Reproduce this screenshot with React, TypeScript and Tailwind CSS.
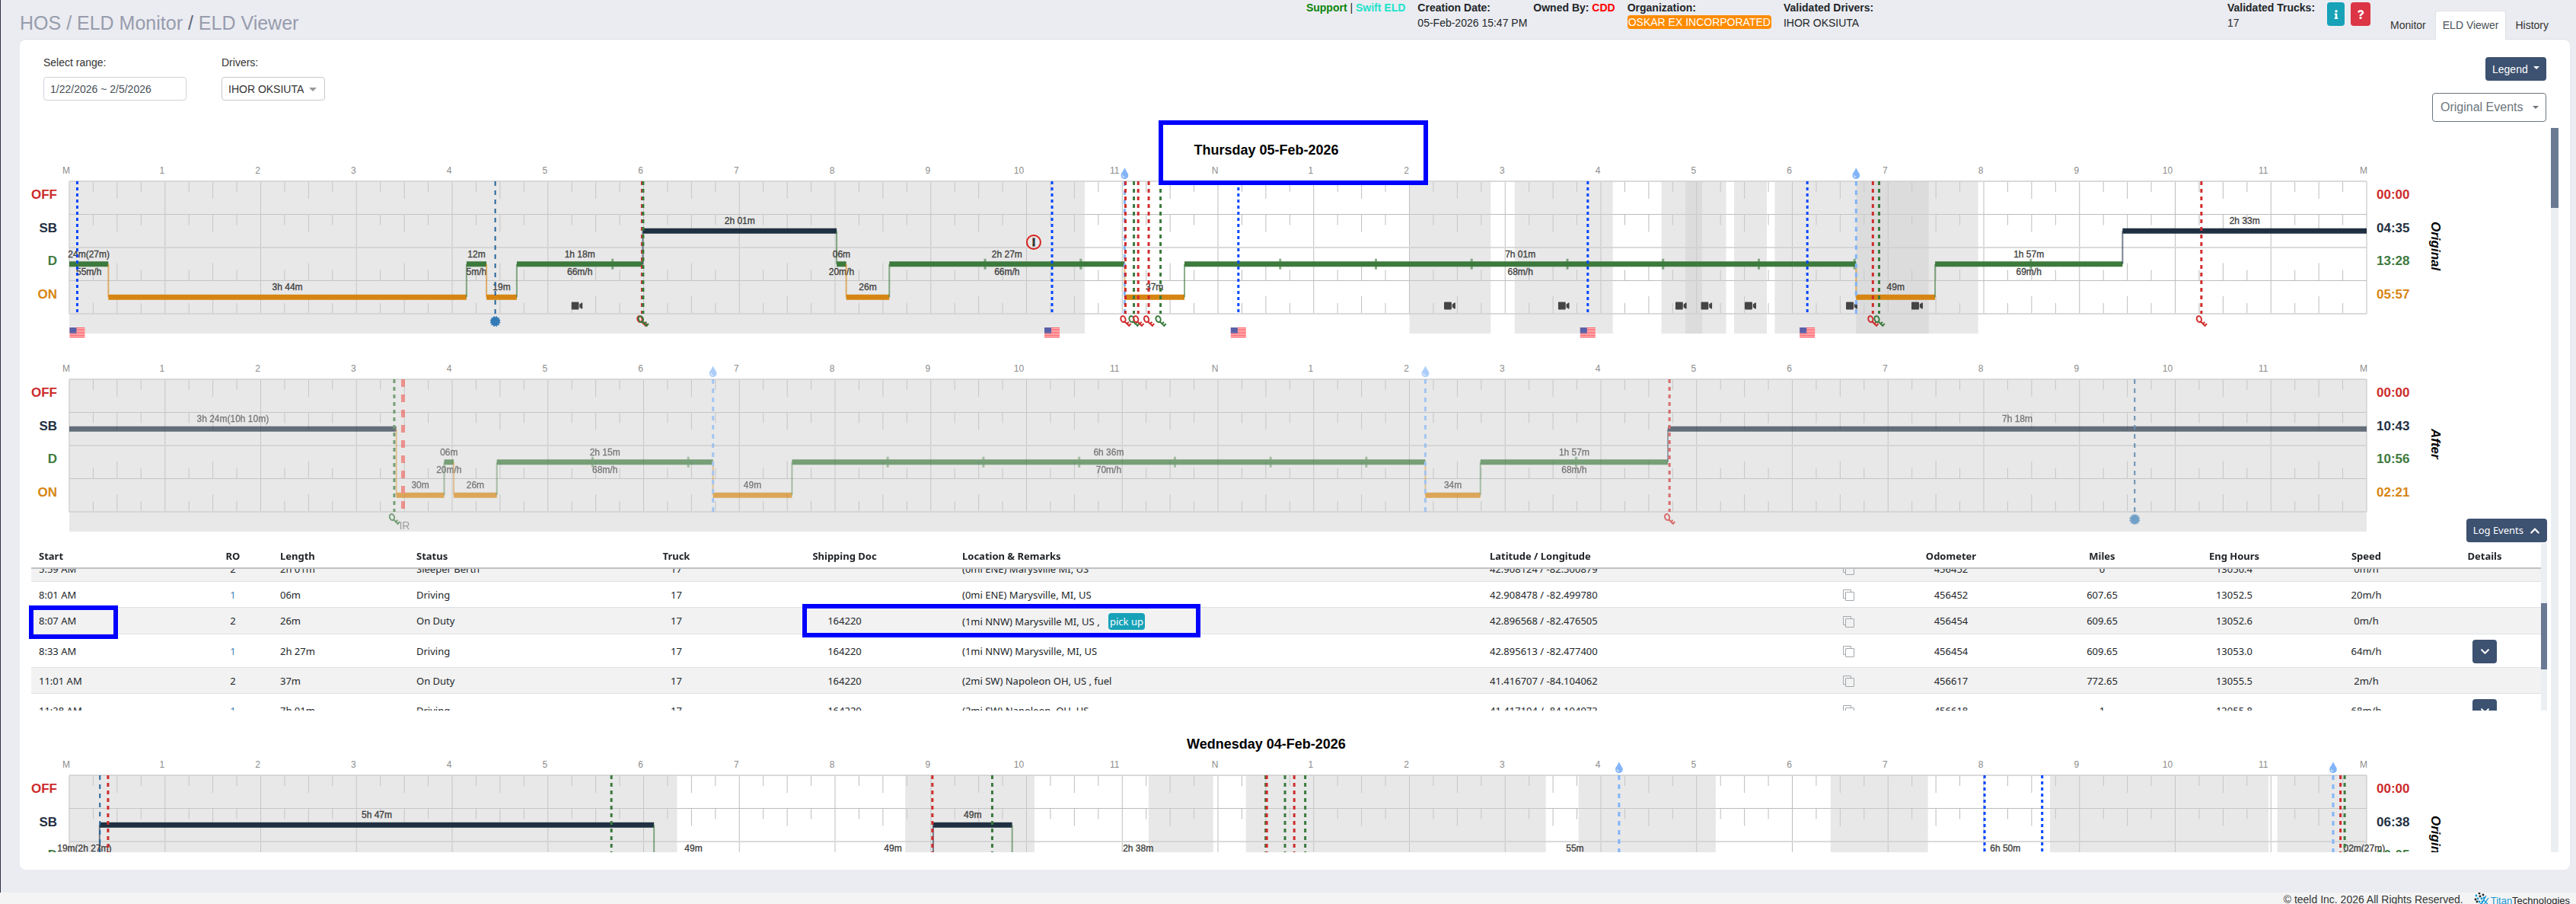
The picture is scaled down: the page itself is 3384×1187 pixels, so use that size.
import React, { useEffect, useRef } from 'react';
import { FaCertificate, FaChevronDown, FaChevronUp, FaInfo, FaQuestion, FaTint, FaVideo } from 'react-icons/fa';

type Duty = 'OFF' | 'SB' | 'D' | 'ON';
type MarkerKind = 'border' | 'cert' | 'on' | 'off' | 'fuel' | 'ir';

interface Segment {
    duty: Duty;
    from: number;
    to: number;
    label: string;
    speed?: string;
}

interface Marker {
    kind: MarkerKind;
    at: number;
}

interface DayLog {
    side: string;
    totals: string[];
    segments: Segment[];
    shades: [number, number][];
    markers: Marker[];
    cameras?: number[];
    alerts?: number[];
    dimmed?: boolean;
}

const DAY = 1440;
const TOP = 24;
const ROW = 43.5;
const GRID = 174;

const DUTY_ROW: Record<Duty, number> = { OFF: 0, SB: 1, D: 2, ON: 3 };
const DUTY_COLOR: Record<Duty, string> = { OFF: '#cc2b2b', SB: '#1f3042', D: '#3d7a3d', ON: '#d68512' };

const MARKER_STYLE: Record<MarkerKind, { color: string; width: number; dash: string }> = {
    border: { color: '#0047ff', width: 3, dash: '4 4' },
    cert: { color: '#22639b', width: 2, dash: '6 6' },
    on: { color: '#3a7a3d', width: 3, dash: '5 5' },
    off: { color: '#cf2c2c', width: 3, dash: '5 5' },
    fuel: { color: '#82b4f8', width: 3, dash: '6 6' },
    ir: { color: '#f0655f', width: 5, dash: '10 10' },
};

const pct = (minutes: number) => `${(minutes / DAY) * 100}%`;
const rowCenter = (duty: Duty) => TOP + ROW * (DUTY_ROW[duty] + 0.5);

const thursdayOriginal: DayLog = {
    side: 'Original',
    totals: ['00:00', '04:35', '13:28', '05:57'],
    segments: [
        { duty: 'D', from: 0, to: 24.5, label: '24m(27m)', speed: '55m/h' },
        { duty: 'ON', from: 24.5, to: 249, label: '3h 44m' },
        { duty: 'D', from: 249, to: 261.5, label: '12m', speed: '5m/h' },
        { duty: 'ON', from: 261.5, to: 280.5, label: '19m' },
        { duty: 'D', from: 280.5, to: 359.5, label: '1h 18m', speed: '66m/h' },
        { duty: 'SB', from: 359.5, to: 481, label: '2h 01m' },
        { duty: 'D', from: 481, to: 487, label: '06m', speed: '20m/h' },
        { duty: 'ON', from: 487, to: 514, label: '26m' },
        { duty: 'D', from: 514, to: 661.5, label: '2h 27m', speed: '66m/h' },
        { duty: 'ON', from: 661.5, to: 699, label: '37m' },
        { duty: 'D', from: 699, to: 1120, label: '7h 01m', speed: '68m/h' },
        { duty: 'ON', from: 1120, to: 1169.5, label: '49m' },
        { duty: 'D', from: 1169.5, to: 1287, label: '1h 57m', speed: '69m/h' },
        { duty: 'SB', from: 1287, to: 1440, label: '2h 33m' },
    ],
    shades: [
        [0, 636.5],
        [840, 891],
        [906, 967.5],
        [998, 1023.5],
        [1013, 1038.5],
        [1043.5, 1064],
        [1069, 1165.5],
        [1120, 1196.5],
    ],
    markers: [
        { kind: 'border', at: 5 },
        { kind: 'cert', at: 267 },
        { kind: 'off', at: 359 },
        { kind: 'on', at: 359.7 },
        { kind: 'border', at: 616 },
        { kind: 'fuel', at: 661.5 },
        { kind: 'off', at: 662 },
        { kind: 'on', at: 667.3 },
        { kind: 'off', at: 670 },
        { kind: 'off', at: 676.6 },
        { kind: 'on', at: 684 },
        { kind: 'border', at: 732.8 },
        { kind: 'border', at: 951.8 },
        { kind: 'border', at: 1089.4 },
        { kind: 'fuel', at: 1120 },
        { kind: 'off', at: 1130.5 },
        { kind: 'on', at: 1134.4 },
        { kind: 'off', at: 1336.4 },
    ],
    cameras: [318, 865, 936.5, 1010, 1026, 1053.5, 1117, 1158],
    alerts: [604.5],
};

const thursdayAfter: DayLog = {
    side: 'After',
    dimmed: true,
    totals: ['00:00', '10:43', '10:56', '02:21'],
    segments: [
        { duty: 'SB', from: 0, to: 205, label: '3h 24m(10h 10m)' },
        { duty: 'ON', from: 205, to: 235, label: '30m' },
        { duty: 'D', from: 235, to: 241, label: '06m', speed: '20m/h' },
        { duty: 'ON', from: 241, to: 268, label: '26m' },
        { duty: 'D', from: 268, to: 403.5, label: '2h 15m', speed: '68m/h' },
        { duty: 'ON', from: 403.5, to: 453, label: '49m' },
        { duty: 'D', from: 453, to: 850, label: '6h 36m', speed: '70m/h' },
        { duty: 'ON', from: 850, to: 884.5, label: '34m' },
        { duty: 'D', from: 884.5, to: 1002, label: '1h 57m', speed: '68m/h' },
        { duty: 'SB', from: 1002, to: 1440, label: '7h 18m' },
    ],
    shades: [[0, 1440]],
    markers: [
        { kind: 'on', at: 203.7 },
        { kind: 'ir', at: 209.2 },
        { kind: 'fuel', at: 403.5 },
        { kind: 'fuel', at: 850 },
        { kind: 'off', at: 1003 },
        { kind: 'cert', at: 1294.6 },
    ],
};

const wednesdayOriginal: DayLog = {
    side: 'Original',
    totals: ['00:00', '06:38', '10:05', '07:17'],
    segments: [
        { duty: 'D', from: 0, to: 19, label: '19m(2h 27m)' },
        { duty: 'SB', from: 19, to: 366.5, label: '5h 47m' },
        { duty: 'D', from: 366.5, to: 416, label: '49m', speed: '61m/h' },
        { duty: 'ON', from: 416, to: 491, label: '1h 15m' },
        { duty: 'D', from: 491, to: 541.5, label: '49m', speed: '63m/h' },
        { duty: 'SB', from: 541.5, to: 591, label: '49m' },
        { duty: 'D', from: 591, to: 749, label: '2h 38m', speed: '66m/h' },
        { duty: 'ON', from: 749, to: 916, label: '2h 47m' },
        { duty: 'D', from: 916, to: 971.5, label: '55m', speed: '58m/h' },
        { duty: 'ON', from: 971.5, to: 1008.5, label: '37m' },
        { duty: 'D', from: 1008.5, to: 1418.5, label: '6h 50m', speed: '67m/h' },
        { duty: 'ON', from: 1418.5, to: 1437, label: '19m' },
        { duty: 'D', from: 1437, to: 1440, label: '02m(27m)' },
    ],
    shades: [
        [0, 381],
        [524, 605],
        [676.5, 717],
        [737.5, 925.5],
        [946, 1032],
        [1104, 1165],
        [1241.5, 1378.5],
        [1384, 1440],
    ],
    markers: [
        { kind: 'cert', at: 19.2 },
        { kind: 'off', at: 24.3 },
        { kind: 'on', at: 339.8 },
        { kind: 'off', at: 541 },
        { kind: 'on', at: 578.5 },
        { kind: 'on', at: 749.9 },
        { kind: 'off', at: 750.6 },
        { kind: 'on', at: 762 },
        { kind: 'off', at: 767.8 },
        { kind: 'on', at: 774.7 },
        { kind: 'fuel', at: 971.4 },
        { kind: 'border', at: 1200.5 },
        { kind: 'border', at: 1236.6 },
        { kind: 'fuel', at: 1419 },
        { kind: 'off', at: 1423.6 },
        { kind: 'on', at: 1426.2 },
    ],
};

// Moves its children to a minute of the day; children use pixels around 0
const At: React.FC<{ minute: number; children: React.ReactNode }> = ({ minute, children }) => (
    <svg x={pct(minute)} y={0} width={1} height={1} overflow="visible">
        {children}
    </svg>
);

const KeyGlyph: React.FC<{ color: string }> = ({ color }) => (
    <g transform="translate(-8 199)" stroke={color} strokeWidth={2} fill="none">
        <ellipse cx={5} cy={6} rx={3} ry={4} transform="rotate(-20 5 6)" />
        <path d="M6.8 9 L13.5 15.5 M9.8 12.4 L12.4 9.8 M12.4 14.8 L15.2 12" />
    </g>
);

const FlagGlyph: React.FC = () => (
    <g transform="translate(-10 216)">
        <rect width={20} height={14} fill="#ffe4e4" />
        {[0, 2, 4, 6, 8, 10, 12].map((y) => (
            <rect key={y} y={y} width={20} height={1.2} fill="#ff5a62" />
        ))}
        <rect width={9} height={7.5} fill="#5a5fa8" />
    </g>
);

const DutyMarker: React.FC<{ marker: Marker }> = ({ marker }) => {
    const { kind, at } = marker;
    const { color, width, dash } = MARKER_STYLE[kind];

    return (
        <g>
            <line
                x1={pct(at)}
                x2={pct(at)}
                y1={TOP}
                y2={TOP + GRID}
                stroke={color}
                strokeWidth={width}
                strokeDasharray={dash}
            />
            <At minute={at}>
                {(kind === 'on' || kind === 'off') && <KeyGlyph color={color} />}
                {kind === 'border' && <FlagGlyph />}
                {kind === 'fuel' && <FaTint x={-7} y={7} size={14} color={color} />}
                {kind === 'cert' && <FaCertificate x={-7} y={201} size={14} color="#337ab7" />}
                {kind === 'ir' && (
                    <text x={-5} y={221} fontSize={14} fill="#777">
                        IR
                    </text>
                )}
            </At>
        </g>
    );
};

const hourLabel = (hour: number) => {
    if (hour % 24 === 0) return 'M';
    if (hour === 12) return 'N';
    return String(hour % 12);
};

const Grid: React.FC = () => (
    <g stroke="#bdbdbd">
        {Array.from({ length: 25 }, (_, h) => (
            <g key={h}>
                <line x1={pct(h * 60)} x2={pct(h * 60)} y1={TOP} y2={TOP + GRID} />
                <text
                    x={pct(h * 60)}
                    dx={hourLabel(h).length > 1 ? -10 : -4}
                    y={14}
                    textAnchor="middle"
                    fontSize={12}
                    fill="#8c8c8c"
                    stroke="none"
                >
                    {hourLabel(h)}
                </text>
            </g>
        ))}
        {Array.from({ length: 96 }, (_, q) => q)
            .filter((q) => q % 4 !== 0)
            .map((q) =>
                [0, 1, 2, 3].map((row) => {
                    const size = q % 4 === 2 ? 23 : 14;
                    const y = TOP + (row < 2 ? row * ROW : (row + 1) * ROW - size);
                    return <line key={`${q}-${row}`} x1={pct(q * 15)} x2={pct(q * 15)} y1={y} y2={y + size} />;
                })
            )}
        {[0, 1, 2, 3, 4].map((row) => (
            <line
                key={row}
                x1="0%"
                x2="100%"
                y1={TOP + row * ROW}
                y2={TOP + row * ROW}
                stroke={row % 2 ? '#bdbdbd' : '#dadada'}
                strokeWidth={row % 2 ? 1 : 2}
            />
        ))}
    </g>
);

const DutyChart: React.FC<{ log: DayLog }> = ({ log }) => (
    <div className="flex items-start pr-[142px]">
        <div className="grid h-[194px] w-[34px] shrink-0 grid-rows-4 pt-5 text-right text-[17px] leading-[43px] font-bold">
            {(Object.keys(DUTY_ROW) as Duty[]).map((duty) => (
                <span key={duty} style={{ color: DUTY_COLOR[duty] }}>
                    {duty}
                </span>
            ))}
        </div>

        <svg className="mr-[13px] ml-4 h-[224px] min-w-0 flex-1 overflow-visible">
            <Grid />
            {log.shades.map(([from, to]) => (
                <rect
                    key={from}
                    x={pct(from)}
                    width={pct(to - from)}
                    y={TOP}
                    height={200}
                    fill="#cfcfcf"
                    fillOpacity={0.48}
                />
            ))}
            <g opacity={log.dimmed ? 0.66 : 1}>
                {log.segments.map((seg, i) => {
                    const y = rowCenter(seg.duty);
                    const mid = pct((seg.from + seg.to) / 2);
                    const prev = log.segments[i - 1];
                    const hours = seg.duty === 'D' ? Math.floor((seg.to - seg.from) / 60) : 0;
                    return (
                        <g key={seg.from}>
                            <rect
                                x={pct(seg.from)}
                                width={pct(seg.to - seg.from)}
                                y={y - 3.5}
                                height={7}
                                fill={DUTY_COLOR[seg.duty]}
                            />
                            {prev && (
                                <line
                                    x1={pct(seg.from)}
                                    x2={pct(seg.from)}
                                    y1={rowCenter(prev.duty)}
                                    y2={y}
                                    stroke={DUTY_COLOR[seg.duty]}
                                    strokeOpacity={0.6}
                                    strokeWidth={2}
                                />
                            )}
                            {Array.from({ length: hours }, (_, h) => (
                                <line
                                    key={h}
                                    x1={pct(seg.from + (h + 1) * 60)}
                                    x2={pct(seg.from + (h + 1) * 60)}
                                    y1={y - 7}
                                    y2={y + 7}
                                    stroke={DUTY_COLOR.D}
                                    strokeOpacity={0.6}
                                    strokeWidth={3}
                                />
                            ))}
                            <g
                                textAnchor="middle"
                                fontSize={12}
                                fill="#3c3c3c"
                                stroke="#3c3c3c"
                                strokeWidth={0.3}
                            >
                                <text x={mid} y={y - 9}>
                                    {seg.label}
                                </text>
                                {seg.speed && (
                                    <text x={mid} y={y + 14}>
                                        {seg.speed}
                                    </text>
                                )}
                            </g>
                        </g>
                    );
                })}
                {log.cameras?.map((at) => (
                    <At key={at} minute={at}>
                        <FaVideo x={-7} y={180} size={15} color="#444" />
                    </At>
                ))}
                {log.markers.map((marker) => (
                    <DutyMarker key={marker.at} marker={marker} />
                ))}
                {log.alerts?.map((at) => (
                    <At key={at} minute={at}>
                        <circle cy={104} r={9} fill="none" stroke="#d8201c" strokeWidth={2} />
                        <text y={109} textAnchor="middle" fontSize={15} fontWeight={700} fill="#333" stroke="#333">
                            !
                        </text>
                    </At>
                ))}
            </g>
        </svg>

        <div className="grid h-[194px] w-[44px] shrink-0 grid-rows-4 pt-5 text-[17px] leading-[43px] font-bold">
            {(Object.keys(DUTY_ROW) as Duty[]).map((duty, i) => (
                <span key={duty} style={{ color: DUTY_COLOR[duty] }}>
                    {log.totals[i]}
                </span>
            ))}
        </div>
        <div className="mt-[22px] ml-[23px] flex h-[174px] w-5 items-center justify-center text-[17px] leading-5 font-bold text-black italic [writing-mode:vertical-rl]">
            {log.side}
        </div>
    </div>
);

interface LogEvent {
    start: string;
    ro: number;
    length: string;
    status: string;
    doc: string;
    location: string;
    tag?: string;
    coords: string;
    odometer: string;
    miles: string;
    engine: string;
    speed: string;
    details?: boolean;
}

const EVENTS: LogEvent[] = [
    { start: '5:59 AM', ro: 2, length: '2h 01m', status: 'Sleeper Berth', doc: '', location: '(0mi ENE) Marysville MI, US', coords: '42.908124 / -82.500879', odometer: '456452', miles: '0', engine: '13050.4', speed: '0m/h' },
    { start: '8:01 AM', ro: 1, length: '06m', status: 'Driving', doc: '', location: '(0mi ENE) Marysville, MI, US', coords: '42.908478 / -82.499780', odometer: '456452', miles: '607.65', engine: '13052.5', speed: '20m/h' },
    { start: '8:07 AM', ro: 2, length: '26m', status: 'On Duty', doc: '164220', location: '(1mi NNW) Marysville MI, US , ', tag: 'pick up', coords: '42.896568 / -82.476505', odometer: '456454', miles: '609.65', engine: '13052.6', speed: '0m/h' },
    { start: '8:33 AM', ro: 1, length: '2h 27m', status: 'Driving', doc: '164220', location: '(1mi NNW) Marysville, MI, US', coords: '42.895613 / -82.477400', odometer: '456454', miles: '609.65', engine: '13053.0', speed: '64m/h', details: true },
    { start: '11:01 AM', ro: 2, length: '37m', status: 'On Duty', doc: '164220', location: '(2mi SW) Napoleon OH, US , fuel', coords: '41.416707 / -84.104062', odometer: '456617', miles: '772.65', engine: '13055.5', speed: '2m/h' },
    { start: '11:38 AM', ro: 1, length: '7h 01m', status: 'Driving', doc: '164220', location: '(2mi SW) Napoleon, OH, US', coords: '41.417194 / -84.104973', odometer: '456618', miles: '1', engine: '13055.8', speed: '68m/h', details: true },
];

const COLUMNS = [
    { title: 'Start', cls: 'w-[213px] text-left' },
    { title: 'RO', cls: 'w-[104px] text-center' },
    { title: 'Length', cls: 'w-[179px] text-left' },
    { title: 'Status', cls: 'w-[275px] text-left' },
    { title: 'Truck', cls: 'w-[153px] text-center' },
    { title: 'Shipping Doc', cls: 'w-[289px] text-center' },
    { title: 'Location & Remarks', cls: 'w-[693px] text-left' },
    { title: 'Latitude / Longitude', cls: 'w-[499px] text-left' },
    { title: 'Odometer', cls: 'w-[234px] text-center' },
    { title: 'Miles', cls: 'w-[163px] text-center' },
    { title: 'Eng Hours', cls: 'w-[184px] text-center' },
    { title: 'Speed', cls: 'w-[163px] text-center' },
    { title: 'Details', cls: 'w-[148px] text-center' },
];

const CopyButton: React.FC = () => (
    <button type="button" aria-label="Copy coordinates" className="block text-[#a3a8ac]">
        <svg width={16} height={15} viewBox="0 0 16 15" fill="none" stroke="currentColor">
            <path d="M4.5 11.5h-3v-11h10v3" />
            <rect x={4.5} y={3.5} width={11} height={11} rx={0.5} />
        </svg>
    </button>
);

const EventsTable: React.FC = () => {
    const scroller = useRef<HTMLDivElement>(null);

    useEffect(() => {
        if (scroller.current) scroller.current.scrollTop = 17;
    }, []);

    return (
        <div className="relative mt-px flex h-[220px] pr-[5px] font-['Noto_Sans','Open_Sans',sans-serif] text-[13px] text-[#212529]">
            <div ref={scroller} className="min-w-0 flex-1 overflow-y-auto [scrollbar-width:none]">
                <table className="w-full table-fixed border-separate border-spacing-0">
                    <thead className="sticky top-0 z-10 bg-white">
                        <tr className="h-[34px]">
                            {COLUMNS.map(({ title, cls }) => (
                                <th key={title} className={`${cls} border-b-2 border-[#bfc2c4] px-[10px] pt-1 font-bold`}>
                                    {title}
                                </th>
                            ))}
                        </tr>
                    </thead>
                    <tbody className="[&_td]:border-b [&_td]:border-[#dee2e6] [&_td]:px-[10px] [&_td]:pt-[2px] [&_td]:whitespace-nowrap [&>tr:nth-child(odd)]:bg-[#f2f2f2]">
                        {EVENTS.map((event) => (
                            <tr key={event.start} className={event.details ? 'h-11' : event.tag ? 'h-[35px]' : 'h-[34px]'}>
                                <td>{event.start}</td>
                                <td className={event.ro === 1 ? 'text-center text-[#3b82b5]' : 'text-center'}>{event.ro}</td>
                                <td>{event.length}</td>
                                <td>{event.status}</td>
                                <td className="text-center">17</td>
                                <td className="text-center">{event.doc}</td>
                                <td>
                                    {event.location}
                                    {event.tag && (
                                        <span className="ml-2 inline-block rounded bg-[#17a2b8] px-[2px] leading-[22px] text-white">
                                            {event.tag}
                                        </span>
                                    )}
                                </td>
                                <td>
                                    <div className="flex items-center justify-between">
                                        {event.coords}
                                        <CopyButton />
                                    </div>
                                </td>
                                <td className="text-center">{event.odometer}</td>
                                <td className="text-center">{event.miles}</td>
                                <td className="text-center">{event.engine}</td>
                                <td className="text-center">{event.speed}</td>
                                <td>
                                    {event.details && (
                                        <button
                                            type="button"
                                            aria-label="Show details"
                                            className="mx-auto flex h-[31px] w-8 items-center justify-center rounded bg-[#3d5170] text-white"
                                        >
                                            <FaChevronDown size={13} />
                                        </button>
                                    )}
                                </td>
                            </tr>
                        ))}
                    </tbody>
                </table>
            </div>
            <div className="w-2 bg-[#ebeff2] pt-[79px]">
                <div className="h-[87px] bg-[#6b7a93]" />
            </div>
            <div className="pointer-events-none absolute top-[82px] -left-[3px] z-20 h-[44px] w-[117px] border-[6px] border-[#0000ff]" />
            <div className="pointer-events-none absolute top-[80px] left-[30.6%] z-20 h-[44px] w-[15.8%] border-[6px] border-[#0000ff]" />
        </div>
    );
};

const Caret: React.FC<{ className?: string }> = ({ className = '' }) => (
    <span className={`inline-block border-x-4 border-t-4 border-x-transparent border-t-current ${className}`} />
);

const DayTitle: React.FC<{ children: React.ReactNode }> = ({ children }) => (
    <h2 className="pt-[15px] pr-[65px] pb-[3px] text-center text-[18px] leading-7 font-bold text-black">{children}</h2>
);

const Header: React.FC = () => (
    <header className="flex h-[52px] items-start pr-[12px] pl-[26px] text-[14px] leading-5 text-[#212529]">
        <nav className="pt-[11px] text-[25px] leading-[38px] whitespace-nowrap text-[#979cad]">
            <a href="#hos">HOS</a> / <a href="#monitor">ELD Monitor</a> <span className="text-[#62677a]">/</span>{' '}
            <a href="#viewer">ELD Viewer</a>
        </nav>

        <div className="ml-auto flex whitespace-nowrap">
            <div className="mr-4 font-bold">
                <a href="#support" className="text-[#0a840a]">Support</a>
                <span className="font-normal"> | </span>
                <span className="text-[#20e3cb]">Swift ELD</span>
            </div>
            <div className="mr-2">
                <div className="font-bold">Creation Date:</div>
                <div>05-Feb-2026 15:47 PM</div>
            </div>
            <div className="mr-4 font-bold">
                Owned By: <span className="text-[#ff0000]">CDD</span>
            </div>
            <div className="mr-4">
                <div className="font-bold">Organization:</div>
                <div className="rounded bg-[#ff8c00] px-px leading-[18px] text-white">OSKAR EX INCORPORATED</div>
            </div>
            <div className="w-[583px]">
                <div className="font-bold">Validated Drivers:</div>
                <div>IHOR OKSIUTA</div>
            </div>
            <div className="mr-4">
                <div className="font-bold">Validated Trucks:</div>
                <div>17</div>
            </div>
            <button type="button" aria-label="Info" className="mt-[3px] mr-2 flex h-[31px] w-[23px] items-center justify-center rounded bg-[#17a2b8] text-white">
                <FaInfo size={12} />
            </button>
            <button type="button" aria-label="Help" className="mt-[3px] mr-4 flex h-[31px] w-[26px] items-center justify-center rounded bg-[#dc3545] text-white">
                <FaQuestion size={12} />
            </button>
        </div>

        <nav className="relative z-10 mt-[14px] flex leading-[38px] whitespace-nowrap text-[#333]">
            <a href="#tab-monitor" className="pr-[12px] pl-[10px]">Monitor</a>
            <a href="#tab-viewer" className="rounded-t border border-b-0 border-[#dee2e6] bg-white px-[9px] leading-[37px] text-[#495057]">
                ELD Viewer
            </a>
            <a href="#tab-history" className="pr-6 pl-[12px]">History</a>
        </nav>
    </header>
);

const TitanLogo: React.FC = () => (
    <span className="flex items-start text-[13px] leading-5">
        <svg width={20} height={18} viewBox="0 0 20 18" className="mr-[2px]">
            {[
                [7, 1, '#222'], [3, 4, '#1798d5'], [8, 5, '#222'], [12, 3, '#222'], [5, 8, '#1798d5'], [10, 8, '#1798d5'],
                [2, 9, '#222'], [7, 12, '#1798d5'], [13, 7, '#1798d5'], [4, 12, '#222'], [11, 12, '#1798d5'], [9, 15, '#1798d5'],
            ].map(([cx, cy, fill]) => (
                <circle key={`${cx}-${cy}`} cx={cx} cy={cy} r={1.4} fill={String(fill)} />
            ))}
            <path d="M10 15 L16 4 M13 16 L19 7 M12 9 L18 15" stroke="#1798d5" strokeWidth={1.3} fill="none" />
        </svg>
        <span className="pt-px">
            <span className="text-[#1798d5]">Titan</span>
            <span className="text-[#222]">Technologies</span>
        </span>
    </span>
);

export default function App() {
    return (
        <div className="h-screen overflow-hidden bg-[#ebecf1] font-['Liberation_Sans',Arial,sans-serif]">
            <div className="border-l border-[#2b2f45]">
                <div className="-ml-px pb-[30px]">
                    <Header />

                    <main className="relative mr-2 -mt-px ml-[26px] rounded-lg border-t border-[#dcdfe4] bg-white pb-[23px]">
                        <div className="flex h-[116px] items-start justify-between pr-[31px] pl-[31px] text-[14px] leading-5 text-[#333]">
                            <div className="flex gap-[46px] pt-5">
                                <div className="flex flex-col gap-[9px]">
                                    <label htmlFor="range">Select range:</label>
                                    <input
                                        id="range"
                                        readOnly
                                        value="1/22/2026 ~ 2/5/2026"
                                        className="h-[31px] w-[188px] rounded border border-[#ced4da] px-2 text-[#495057] outline-none"
                                    />
                                </div>
                                <div className="flex flex-col gap-[9px]">
                                    <label htmlFor="drivers">Drivers:</label>
                                    <div className="relative">
                                        <select
                                            id="drivers"
                                            className="h-[31px] w-[136px] appearance-none rounded border border-[#c8c8c8] bg-white px-2"
                                        >
                                            <option>IHOR OKSIUTA</option>
                                        </select>
                                        <span className="pointer-events-none absolute top-[14px] right-[11px] border-x-[5px] border-t-[5px] border-x-transparent border-t-[#999]" />
                                    </div>
                                </div>
                            </div>
                            <div className="flex flex-col items-end gap-4 pt-[23px]">
                                <button type="button" className="flex h-[31px] w-20 items-center justify-between rounded bg-[#3d5170] px-[9px] text-white">
                                    Legend <Caret className="mb-[3px]" />
                                </button>
                                <button
                                    type="button"
                                    className="flex h-[38px] w-[150px] items-center justify-between rounded border border-[#6c757d] pr-[9px] pl-[10px] text-[16px] text-[#6c757d]"
                                >
                                    Original Events <Caret />
                                </button>
                            </div>
                        </div>

                        <div className="flex h-[calc(100vh-236px)] pr-[15px]">
                            <div className="min-w-0 flex-1 overflow-y-auto pl-[15px] [scrollbar-width:none]">
                                <DayTitle>Thursday 05-Feb-2026</DayTitle>
                                <DutyChart log={thursdayOriginal} />
                                <div className="h-9" />
                                <DutyChart log={thursdayAfter} />
                                <div className="-mt-[17px] flex justify-end pr-[5px]">
                                    <button
                                        type="button"
                                        className="flex h-[31px] items-center gap-2 rounded bg-[#3d5170] px-[9px] font-['Noto_Sans','Open_Sans',sans-serif] text-[13px] text-white"
                                    >
                                        Log Events <FaChevronUp size={14} />
                                    </button>
                                </div>
                                <EventsTable />
                                <div className="h-[15px]" />
                                <DayTitle>Wednesday 04-Feb-2026</DayTitle>
                                <DutyChart log={wednesdayOriginal} />
                            </div>
                            <div className="w-[10px] bg-[#ebeff2]">
                                <div className="h-[105px] bg-[#6b7a93]" />
                            </div>
                        </div>

                        <div className="pointer-events-none absolute top-[106px] left-1/2 z-20 -ml-[179px] h-[85px] w-[354px] border-[6px] border-[#0000ff]" />
                    </main>
                </div>
            </div>

            <footer className="flex justify-end gap-[14px] bg-[#f4f4f4] pr-2 text-[14px] leading-[18px] text-[#333]">
                <span>© teeld Inc. 2026 All Rights Reserved.</span>
                <TitanLogo />
            </footer>
        </div>
    );
}
